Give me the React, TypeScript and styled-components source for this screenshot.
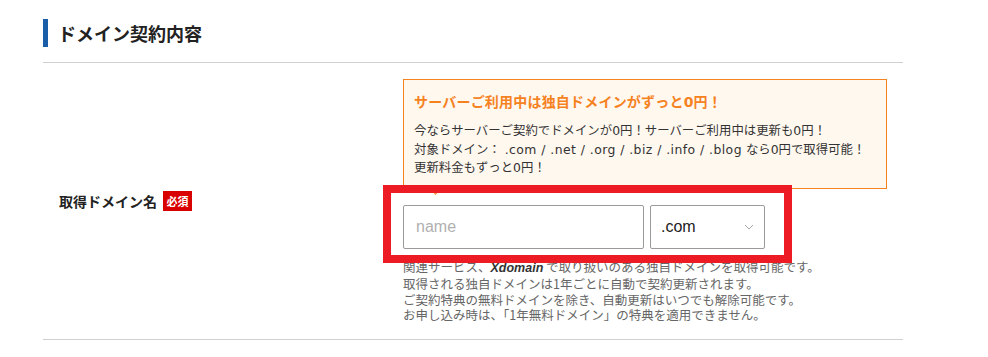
import React from "react";
import styled, { createGlobalStyle } from "styled-components";

const GlobalStyle = createGlobalStyle`
  html, body {
    margin: 0;
    padding: 0;
    background: #ffffff;
  }
  body {
    font-family: "Noto Sans CJK JP", "Noto Sans", sans-serif;
    color: #333;
  }
`;

const Page = styled.div`
  width: 860px;
  margin-left: 43px;
  padding-top: 19px;
`;

const SectionTitle = styled.h2`
  margin: 0;
  height: 28px;
  line-height: 28px;
  border-left: 5px solid #1b5ea8;
  padding-left: 10px;
  font-size: 18px;
  font-weight: 700;
  color: #222;
`;

const Table = styled.div`
  margin-top: 15px;
  border-top: 1px solid #d0d0d0;
  border-bottom: 1px solid #d0d0d0;
`;

const Row = styled.div`
  display: grid;
  grid-template-columns: 360px 1fr;
  align-items: center;
`;

const Label = styled.div`
  display: flex;
  align-items: center;
  gap: 6px;
  padding-left: 16px;
  font-size: 14px;
  font-weight: 700;
  color: #222;
`;

const Badge = styled.span`
  display: inline-flex;
  align-items: center;
  justify-content: center;
  width: 29px;
  height: 20px;
  background: #d90000;
  color: #fff;
  font-size: 11px;
  font-weight: 700;
`;

const Content = styled.div`
  padding: 16px 0;
`;

const Notice = styled.div`
  position: relative;
  width: 484px;
  box-sizing: border-box;
  border: 1px solid #f5821f;
  background: #fff8ef;
  padding: 12px 10px 10px;
  font-family: "DejaVu Sans", "Noto Sans CJK JP", sans-serif;
`;

const NoticeTitle = styled.p`
  margin: 0 0 10px;
  line-height: 20px;
  font-size: 14px;
  font-weight: 700;
  letter-spacing: 0.2px;
  color: #f5821f;
`;

const NoticeText = styled.p`
  margin: 0;
  font-size: 12.4px;
  line-height: 18.5px;
  color: #333;
`;

const DomainList = styled.span`
  letter-spacing: 0.45px;
`;

const Pointer = styled.span`
  position: absolute;
  left: 27px;
  bottom: -5px;
  width: 8px;
  height: 8px;
  background: #fff8ef;
  border-right: 1px solid #f5821f;
  border-bottom: 1px solid #f5821f;
  transform: rotate(45deg);
`;

const FormRow = styled.div`
  position: relative;
  display: flex;
  gap: 6px;
  margin-top: 16px;
`;

const NameInput = styled.input`
  width: 241px;
  height: 44px;
  box-sizing: border-box;
  border: 1px solid #9a9a9a;
  border-radius: 2px;
  padding: 0 12px;
  font-family: "Liberation Sans", Arial, sans-serif;
  font-size: 16px;
  color: #333;
  background: #fff;
  outline: none;
  &::placeholder {
    color: #b0b0b0;
  }
`;

const SelectBox = styled.div`
  width: 115px;
  height: 44px;
  box-sizing: border-box;
  border: 1px solid #9a9a9a;
  border-radius: 2px;
  padding: 0 10px;
  display: flex;
  align-items: center;
  justify-content: space-between;
  font-family: "Liberation Sans", Arial, sans-serif;
  font-size: 16px;
  color: #222;
  background: #fff;
`;

const Highlight = styled.div`
  position: absolute;
  left: -20px;
  top: -20px;
  width: 409px;
  height: 78px;
  box-sizing: border-box;
  border: 8px solid #ed1c24;
  pointer-events: none;
`;

const Help = styled.p`
  margin: 10px 0 0;
  font-size: 12.5px;
  line-height: 15.6px;
  color: #666;
`;

const Brand = styled.b`
  font-family: "Liberation Sans", Arial, sans-serif;
  font-style: italic;
  font-weight: 700;
  color: #333;
`;

const Chevron = () => (
  <svg width="10" height="6" viewBox="0 0 10 6" fill="none">
    <path d="M1 1 L5 5 L9 1" stroke="#a8a8a8" strokeWidth="1" />
  </svg>
);

export default function App() {
  return (
    <>
      <GlobalStyle />
      <Page>
        <SectionTitle>ドメイン契約内容</SectionTitle>
        <Table>
          <Row>
            <Label>
              取得ドメイン名<Badge>必須</Badge>
            </Label>
            <Content>
              <Notice>
                <NoticeTitle>サーバーご利用中は独自ドメインがずっと0円！</NoticeTitle>
                <NoticeText>
                  今ならサーバーご契約でドメインが0円！サーバーご利用中は更新も0円！
                  <br />
                  対象ドメイン： <DomainList>.com / .net / .org / .biz / .info / .blog</DomainList> なら0円で取得可能！
                  <br />
                  更新料金もずっと0円！
                </NoticeText>
                <Pointer />
              </Notice>
              <FormRow>
                <NameInput placeholder="name" />
                <SelectBox>
                  <span>.com</span>
                  <Chevron />
                </SelectBox>
                <Highlight />
              </FormRow>
              <Help>
                関連サービス、<Brand>Xdomain</Brand> で取り扱いのある独自ドメインを取得可能です。
                <br />
                取得される独自ドメインは1年ごとに自動で契約更新されます。
                <br />
                ご契約特典の無料ドメインを除き、自動更新はいつでも解除可能です。
                <br />
                お申し込み時は、「1年無料ドメイン」の特典を適用できません。
              </Help>
            </Content>
          </Row>
        </Table>
      </Page>
    </>
  );
}
